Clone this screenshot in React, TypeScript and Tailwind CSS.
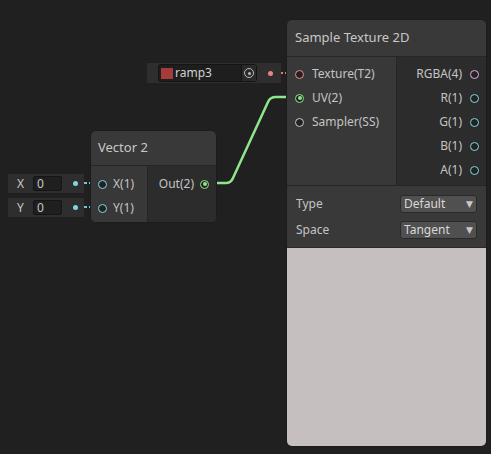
import React from 'react';

const font = { fontFamily: '"Noto Sans", "DejaVu Sans", sans-serif' };

const Port: React.FC<{ color: string; filled?: boolean }> = ({ color, filled }) => (
  <span
    className="w-[9px] h-[9px] rounded-full border-[1.5px] flex items-center justify-center shrink-0"
    style={{ borderColor: color, background: '#222' }}
  >
    {filled && <span className="w-[4px] h-[4px] rounded-full" style={{ background: color }} />}
  </span>
);

const Dropdown: React.FC<{ label: string }> = ({ label }) => (
  <div className="w-[77px] h-[18px] bg-[#505050] rounded-[3px] border border-[#2a2a2a] flex items-center justify-between px-[3px] text-[12px] text-[#d8d8d8]">
    <span>{label}</span>
    <span className="text-[9px] text-[#c8c8c8]">▼</span>
  </div>
);

const InField: React.FC<{ label: string }> = ({ label }) => (
  <div className="w-[76px] h-[19px] bg-[#2e2e2e] flex items-center text-[12px] text-[#c8c8c8]">
    <span className="w-[25px] text-center">{label}</span>
    <span className="w-[29px] h-[15px] bg-[#1f1f1f] border border-[#151515] rounded-[2px] pl-[3px] leading-[13px]">0</span>
    <span className="ml-auto mr-[6px] w-[5px] h-[5px] rounded-full bg-[#7fd6e0]" />
  </div>
);

export default function App() {
  return (
    <div className="relative w-[491px] h-[454px] bg-[#202020] overflow-hidden" style={font}>
      <svg className="absolute inset-0" width="491" height="454">
        <path d="M210 183 H226 Q231 183 233 178 L268 102 Q270 97 276 97 H296" fill="none" stroke="#8ee58a" strokeWidth="2.5" />
        <line x1="275" y1="73" x2="296" y2="73" stroke="#e07a7a" strokeWidth="2" strokeDasharray="3 2" />
        <line x1="79" y1="183" x2="98" y2="183" stroke="#6fc8d2" strokeWidth="2" strokeDasharray="3 2" />
        <line x1="79" y1="207" x2="98" y2="207" stroke="#6fc8d2" strokeWidth="2" strokeDasharray="3 2" />
      </svg>

      {/* ramp3 property */}
      <div className="absolute left-[147px] top-[63px] w-[134px] h-[20px] bg-[#2e2e2e] flex items-center">
        <div className="ml-[11px] w-[99px] h-[18px] bg-[#1e1e1e] border border-[#141414] rounded-[3px] flex items-center">
          <span className="ml-[2px] w-[12px] h-[11px] bg-[#a63b3b]" />
          <span className="ml-[2px] text-[12px] text-[#d0d0d0]">ramp3</span>
          <span className="ml-auto w-[15px] h-full border-l border-[#141414] bg-[#2a2a2a] flex items-center justify-center">
            <span className="w-[10px] h-[10px] rounded-full border border-[#bbb] flex items-center justify-center">
              <span className="w-[3px] h-[3px] rounded-full bg-[#bbb]" />
            </span>
          </span>
        </div>
        <span className="ml-auto mr-[8px] w-[5px] h-[5px] rounded-full bg-[#f08080]" />
      </div>

      {/* X / Y fields */}
      <div className="absolute left-[8px] top-[174px] flex flex-col gap-[5px]">
        <InField label="X" />
        <InField label="Y" />
      </div>

      {/* Vector 2 node */}
      <div className="absolute left-[90px] top-[130px] w-[127px] h-[93px] rounded-[6px] bg-[#393939] border border-[#1c1c1c] overflow-hidden flex flex-col">
        <div className="h-[35px] flex items-center px-[7px] text-[13px] text-[#c8c8c8] border-b border-[#262626]">Vector 2</div>
        <div className="flex flex-1">
          <div className="w-[57px] bg-[#383838] border-r border-[#262626] flex flex-col pt-[10px] gap-[8px] pl-[7px] text-[12px] text-[#c4c4c4]">
            <div className="flex items-center gap-[6px] h-[16px]"><Port color="#80d8e2" />X(1)</div>
            <div className="flex items-center gap-[6px] h-[16px]"><Port color="#80d8e2" />Y(1)</div>
          </div>
          <div className="flex-1 bg-[#2c2c2c] flex flex-col items-end pt-[10px] pr-[7px] text-[12px] text-[#c4c4c4]">
            <div className="flex items-center gap-[6px] h-[16px]">Out(2)<Port color="#8ee58a" filled /></div>
          </div>
        </div>
      </div>

      {/* Sample Texture 2D node */}
      <div className="absolute left-[286px] top-[19px] w-[201px] h-[428px] rounded-[6px] bg-[#393939] border border-[#1c1c1c] overflow-hidden flex flex-col">
        <div className="h-[37px] flex items-center px-[8px] text-[13px] text-[#c8c8c8] border-b border-[#262626]">Sample Texture 2D</div>
        <div className="flex h-[129px] border-b border-[#262626]">
          <div className="w-[110px] bg-[#383838] border-r border-[#262626] flex flex-col pt-[9px] gap-[8px] pl-[8px] text-[12px] text-[#c4c4c4]">
            <div className="flex items-center gap-[8px] h-[16px]"><Port color="#f08a8a" />Texture(T2)</div>
            <div className="flex items-center gap-[8px] h-[16px]"><Port color="#8ee58a" filled />UV(2)</div>
            <div className="flex items-center gap-[8px] h-[16px]"><Port color="#c8c8c8" />Sampler(SS)</div>
          </div>
          <div className="flex-1 bg-[#2c2c2c] flex flex-col items-end pt-[9px] gap-[8px] pr-[7px] text-[12px] text-[#c4c4c4]">
            <div className="flex items-center gap-[8px] h-[16px]">RGBA(4)<Port color="#e6a8e6" /></div>
            <div className="flex items-center gap-[8px] h-[16px]">R(1)<Port color="#80d8e2" /></div>
            <div className="flex items-center gap-[8px] h-[16px]">G(1)<Port color="#80d8e2" /></div>
            <div className="flex items-center gap-[8px] h-[16px]">B(1)<Port color="#80d8e2" /></div>
            <div className="flex items-center gap-[8px] h-[16px]">A(1)<Port color="#80d8e2" /></div>
          </div>
        </div>
        <div className="bg-[#393939] flex flex-col gap-[8px] px-[9px] pt-[9px] pb-[8px] text-[12px] text-[#c4c4c4]">
          <div className="flex items-center justify-between h-[18px]">Type<Dropdown label="Default" /></div>
          <div className="flex items-center justify-between h-[18px]">Space<Dropdown label="Tangent" /></div>
        </div>
        <div className="flex-1 bg-[#c6bfbf] border-t border-[#2a2a2a]" />
      </div>
    </div>
  );
}
